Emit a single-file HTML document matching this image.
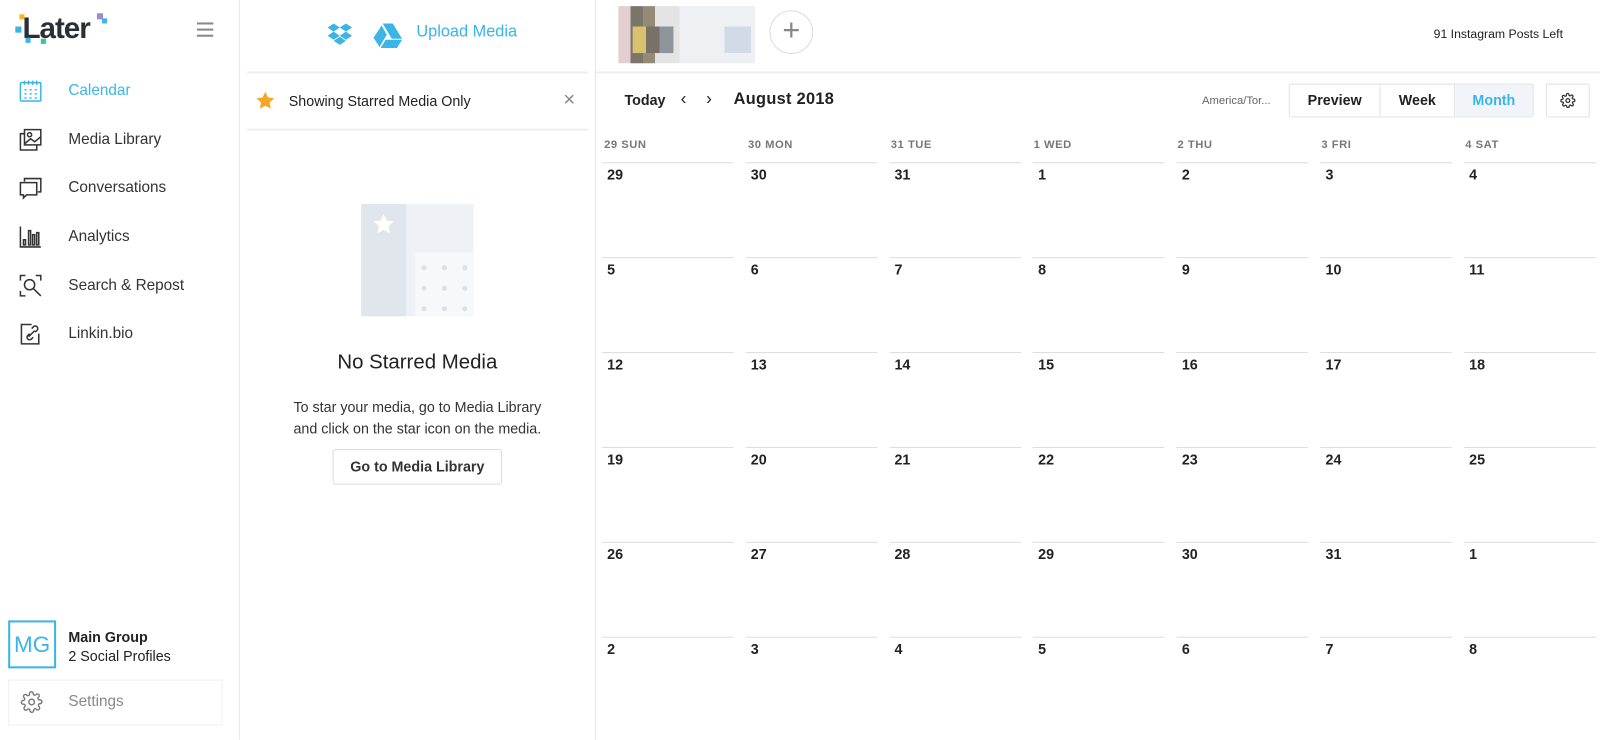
<!DOCTYPE html>
<html><head><meta charset="utf-8"><style>
*{box-sizing:border-box;margin:0;padding:0}
body{width:1600px;height:725px;overflow:hidden;background:#fff;font-family:"Liberation Sans",sans-serif;color:#222;position:relative}
#w{position:absolute;left:0;top:0;width:1568px;height:711px;transform:scale(1.0204);transform-origin:0 0}
.a{position:absolute}
.nav{position:absolute;left:67px;font-size:15px;color:#333}
.ic{position:absolute;left:19px}
.hd{position:absolute;top:136px;font-size:11px;font-weight:bold;color:#777;letter-spacing:.5px}
.cell{position:absolute;width:129px;border-top:1px solid #ddd;font-size:14px;font-weight:bold;color:#222;padding:3px 0 0 5px}
</style></head><body><div id="w">
<div class="a" style="left:234px;top:0;width:1px;height:725px;background:#e6e6e6"></div>
<div class="a" style="top:12px;font-size:29px;font-weight:bold;color:#2a2f36;letter-spacing:-1px;left:22px">Later</div>
<div class="a" style="left:19px;top:14px;width:5px;height:5px;background:#f5b623"></div>
<div class="a" style="left:15px;top:26px;width:6px;height:6px;background:#3ab5e6"></div>
<div class="a" style="left:25px;top:37px;width:5px;height:5px;background:#3ab5e6"></div>
<div class="a" style="left:40px;top:38px;width:5px;height:5px;background:#2ecc9a"></div>
<div class="a" style="left:95px;top:13px;width:6px;height:6px;background:#9b88d8"></div>
<div class="a" style="left:100px;top:18px;width:5px;height:5px;background:#3ab5e6"></div>
<div class="a" style="left:193px;top:22px;width:16px;height:2px;background:#888;box-shadow:0 6px 0 #888,0 12px 0 #888"></div>

<svg class="ic" style="top:78px" width="22" height="22" viewBox="0 0 22 22" fill="none" stroke="#3ab5e6" stroke-width="1.5"><rect x="1" y="3" width="20" height="18" rx="1"/><path d="M5 1v4M9 1v4M13 1v4M17 1v4"/><path d="M5 10h2M10 10h2M15 10h2M5 14h2M10 14h2M15 14h2M5 18h2M10 18h2M15 18h2"/></svg>
<div class="nav" style="top:80px;color:#3ab5e6">Calendar</div>
<svg class="ic" style="top:126px" width="22" height="22" viewBox="0 0 22 22" fill="none" stroke="#333" stroke-width="1.5"><rect x="5" y="1" width="16" height="15"/><path d="M5 5H1v16h16v-5"/><circle cx="10" cy="6" r="2"/><path d="M5 15l6-5 4 3 6-5"/></svg>
<div class="nav" style="top:128px">Media Library</div>
<svg class="ic" style="top:174px" width="22" height="22" viewBox="0 0 22 22" fill="none" stroke="#333" stroke-width="1.5"><path d="M5 4V1h16v13h-3"/><path d="M1 5h16v12H7l-3 3v-3H1z"/></svg>
<div class="nav" style="top:175px">Conversations</div>
<svg class="ic" style="top:221px" width="22" height="22" viewBox="0 0 22 22" fill="none" stroke="#333" stroke-width="1.5"><path d="M1 1v20h20"/><rect x="4" y="14" width="2" height="5"/><rect x="9" y="5" width="2" height="14"/><rect x="13" y="9" width="2" height="10"/><rect x="17" y="7" width="2" height="12"/></svg>
<div class="nav" style="top:223px">Analytics</div>
<svg class="ic" style="top:269px" width="22" height="22" viewBox="0 0 22 22" fill="none" stroke="#333" stroke-width="1.5"><path d="M1 6V1h5M16 1h5v5M1 16v5h5"/><circle cx="10" cy="10" r="5"/><path d="M14 14l7 7"/></svg>
<div class="nav" style="top:271px">Search &amp; Repost</div>
<svg class="ic" style="top:316px" width="22" height="22" viewBox="0 0 22 22" fill="none" stroke="#333" stroke-width="1.5"><path d="M12 2H2v19h17V11"/><path d="M9 14l6-6M12 6l2-2a2.5 2.5 0 013.5 3.5l-2 2M10 11l-2 2a2.5 2.5 0 003.5 3.5l2-2"/></svg>
<div class="nav" style="top:318px">Linkin.bio</div>

<div class="a" style="left:8px;top:608px;width:47px;height:47px;border:2px solid #3ab5e6;color:#3ab5e6;font-size:22px;text-align:center;line-height:43px">MG</div>
<div class="a" style="left:67px;top:616px;font-size:14px;font-weight:bold">Main Group</div>
<div class="a" style="left:67px;top:635px;font-size:14px">2 Social Profiles</div>
<div class="a" style="left:8px;top:666px;width:210px;height:45px;border:1px solid #f0f0f0"></div>
<svg class="a" style="left:20px;top:677px" width="22" height="22" viewBox="0 0 24 24" fill="none" stroke="#777" stroke-width="1.5"><circle cx="12" cy="12" r="3"/><path d="M19.4 15a1.6 1.6 0 00.3 1.8l.1.1a2 2 0 11-2.8 2.8l-.1-.1a1.6 1.6 0 00-2.7 1.1V21a2 2 0 11-4 0v-.1a1.6 1.6 0 00-2.7-1.1l-.1.1a2 2 0 11-2.8-2.8l.1-.1a1.6 1.6 0 00-1.1-2.7H3a2 2 0 110-4h.1a1.6 1.6 0 001.1-2.7l-.1-.1a2 2 0 112.8-2.8l.1.1a1.6 1.6 0 002.7-1.1V3a2 2 0 114 0v.1a1.6 1.6 0 002.7 1.1l.1-.1a2 2 0 112.8 2.8l-.1.1a1.6 1.6 0 001.1 2.7H21a2 2 0 110 4h-.1a1.6 1.6 0 00-1.5 1z"/></svg>
<div class="a" style="left:67px;top:679px;font-size:15px;color:#888">Settings</div>

<div class="a" style="left:583px;top:0;width:1px;height:725px;background:#e6e6e6"></div>
<svg class="a" style="left:320px;top:22px" width="26" height="24" viewBox="0 0 26 24" fill="#3ab5e6"><path d="M7 1l6 4-6 4-6-4zM19 1l6 4-6 4-6-4zM1 13l6-4 6 4-6 4zM13 13l6-4 6 4-6 4zM7 18l6-4 6 4-6 4z"/></svg>
<svg class="a" style="left:366px;top:22px" width="28" height="25" viewBox="0 0 28 25" fill="#3ab5e6"><path d="M9 1h10l9 15h-10zM8 3l5 9-7 12-6-9zM12 17h16l-5 8H7z"/></svg>
<div class="a" style="left:408px;top:23px;font-size:16px;color:#3ab5e6">Upload Media</div>
<div class="a" style="left:242px;top:70px;width:334px;height:2px;background:#eee"></div>
<svg class="a" style="left:251px;top:90px" width="18" height="17" viewBox="0 0 24 23"><path fill="#f5a623" d="M12 0l3.6 7.4 8.1 1.1-5.9 5.7 1.4 8.1L12 18.5l-7.2 3.8 1.4-8.1L.3 8.5l8.1-1.1z"/></svg>
<div class="a" style="left:283px;top:91px;font-size:14px">Showing Starred Media Only</div>
<div class="a" style="left:552px;top:87px;font-size:20px;color:#888">×</div>
<div class="a" style="left:242px;top:126px;width:334px;height:2px;background:#eee"></div>
<div class="a" style="left:354px;top:200px;width:110px;height:110px;background:#eef1f5"></div>
<div class="a" style="left:354px;top:200px;width:44px;height:110px;background:#e1e6ed"></div>
<div class="a" style="left:407px;top:248px;width:57px;height:62px;background:#f7f8fa"></div>
<svg class="a" style="left:366px;top:210px" width="20" height="19" viewBox="0 0 24 23"><path fill="#fff" d="M12 0l3.6 7.4 8.1 1.1-5.9 5.7 1.4 8.1L12 18.5l-7.2 3.8 1.4-8.1L.3 8.5l8.1-1.1z"/></svg>
<div class="a" style="left:413px;top:260px;width:5px;height:5px;border-radius:50%;background:#dde1e7;box-shadow:20px 0 #dde1e7,40px 0 #dde1e7,0 20px #dde1e7,20px 20px #dde1e7,40px 20px #dde1e7,0 40px #dde1e7,20px 40px #dde1e7,40px 40px #dde1e7"></div>
<div class="a" style="left:242px;top:344px;width:334px;text-align:center;font-size:20px;color:#222">No Starred Media</div>
<div class="a" style="left:242px;top:389px;width:334px;text-align:center;font-size:14px;line-height:21px;color:#333">To star your media, go to Media Library<br>and click on the star icon on the media.</div>
<div class="a" style="left:326px;top:440px;width:166px;height:35px;border:1px solid #ddd;border-radius:3px;text-align:center;line-height:33px;font-size:14px;font-weight:bold;color:#333">Go to Media Library</div>

<div class="a" style="left:606px;top:6px;width:60px;height:56px;background:linear-gradient(90deg,#dcc3c6 0 20%,#5a5245 20% 40%,#7a6d55 40% 60%,#ddd 60%);opacity:.8"></div>
<div class="a" style="left:620px;top:26px;width:40px;height:26px;background:linear-gradient(90deg,#d8c270 0 33%,#777168 33% 66%,#8f959b 66%)"></div>
<div class="a" style="left:666px;top:6px;width:74px;height:56px;background:#eef0f3"></div>
<div class="a" style="left:710px;top:26px;width:26px;height:26px;background:#d0dbe7"></div>
<div class="a" style="left:754px;top:10px;width:43px;height:43px;border:1px solid #ddd;border-radius:50%;text-align:center;line-height:38px;font-size:30px;color:#888;font-weight:300">+</div>
<div class="a" style="left:1405px;top:26px;font-size:12px;color:#222">91 Instagram Posts Left</div>
<div class="a" style="left:584px;top:70px;width:1016px;height:2px;background:#eee"></div>

<div class="a" style="left:612px;top:90px;font-size:14px;font-weight:bold">Today</div>
<div class="a" style="left:667px;top:87px;font-size:17px">&#8249;</div>
<div class="a" style="left:692px;top:87px;font-size:17px">&#8250;</div>
<div class="a" style="left:719px;top:89px;font-size:16px;font-weight:bold;letter-spacing:.3px">August 2018</div>
<div class="a" style="left:1178px;top:93px;font-size:11px;color:#666">America/Tor...</div>
<div class="a" style="left:1263px;top:82px;width:240px;height:33px;border:1px solid #e3e3e3;border-radius:2px;display:flex;font-size:14px;font-weight:bold">
<div style="width:89px;text-align:center;line-height:31px;border-right:1px solid #e3e3e3">Preview</div>
<div style="width:73px;text-align:center;line-height:31px;border-right:1px solid #e3e3e3">Week</div>
<div style="flex:1;text-align:center;line-height:31px;background:#f1f5f9;color:#3ab5e6">Month</div></div>
<div class="a" style="left:1515px;top:82px;width:43px;height:33px;border:1px solid #e3e3e3;border-radius:2px"></div>
<svg class="a" style="left:1529px;top:91px" width="15" height="15" viewBox="0 0 24 24" fill="none" stroke="#333" stroke-width="2"><circle cx="12" cy="12" r="3"/><path d="M19.4 15a1.6 1.6 0 00.3 1.8l.1.1a2 2 0 11-2.8 2.8l-.1-.1a1.6 1.6 0 00-2.7 1.1V21a2 2 0 11-4 0v-.1a1.6 1.6 0 00-2.7-1.1l-.1.1a2 2 0 11-2.8-2.8l.1-.1a1.6 1.6 0 00-1.1-2.7H3a2 2 0 110-4h.1a1.6 1.6 0 001.1-2.7l-.1-.1a2 2 0 112.8-2.8l.1.1a1.6 1.6 0 002.7-1.1V3a2 2 0 114 0v.1a1.6 1.6 0 002.7 1.1l.1-.1a2 2 0 112.8 2.8l-.1.1a1.6 1.6 0 001.1 2.7H21a2 2 0 110 4h-.1a1.6 1.6 0 00-1.5 1z"/></svg>

<div class="hd" style="left:592px">29 SUN</div>
<div class="hd" style="left:733px">30 MON</div>
<div class="hd" style="left:873px">31 TUE</div>
<div class="hd" style="left:1013px">1 WED</div>
<div class="hd" style="left:1154px">2 THU</div>
<div class="hd" style="left:1295px">3 FRI</div>
<div class="hd" style="left:1436px">4 SAT</div>
<div id="g"></div>
</div>
<script>
var d=[[29,30,31,1,2,3,4],[5,6,7,8,9,10,11],[12,13,14,15,16,17,18],[19,20,21,22,23,24,25],[26,27,28,29,30,31,1],[2,3,4,5,6,7,8]],h='';
for(var r=0;r<6;r++)for(var c=0;c<7;c++)h+='<div class="cell" style="left:'+(590+c*140.8)+'px;top:'+(159+r*93)+'px">'+d[r][c]+'</div>';
document.getElementById('g').innerHTML=h;
</script>
</body></html>
